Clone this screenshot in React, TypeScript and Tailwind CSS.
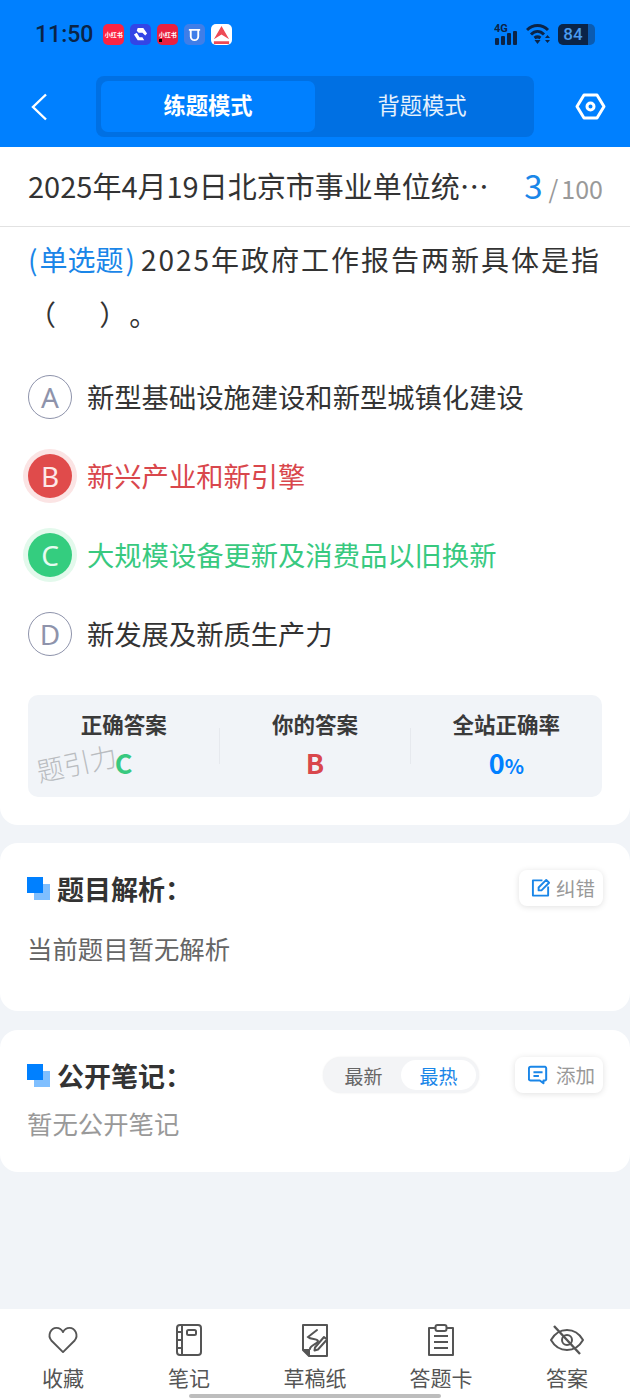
const font = '[font-family:"Noto_Sans_CJK_SC","Noto_Sans",sans-serif]';

function AppBadge({ bg, children }: { bg: string; children?: React.ReactNode }) {
  return <div className={`relative flex h-[21px] w-[21px] items-center justify-center overflow-hidden rounded-[5px] ${bg}`}>{children}</div>;
}

function StatusBar() {
  return (
    <div className="flex h-[68px] items-center pl-[35px] pr-[35px]">
      <span className="text-[23px] font-medium leading-none text-[#0b2447] [font-family:Roboto,sans-serif]">11:50</span>
      <div className="ml-[10px] flex gap-[6px]">
        <AppBadge bg="bg-[#fb2443]"><span className="text-[6px] font-bold text-white">小红书</span></AppBadge>
        <AppBadge bg="bg-[#3345e6]">
          <svg width="15" height="15" viewBox="0 0 16 16" fill="#fff"><path d="M5 1h6l4 6-2 2-3-3H6L4 4zM1 8l3-2 3 5h3l2 3H5z" /></svg>
        </AppBadge>
        <AppBadge bg="bg-[#e9203f]">
          <span className="text-[6px] font-bold text-white">小红书</span>
          <span className="absolute bottom-[3px] left-[2px] h-[3px] w-[3px] bg-black" />
        </AppBadge>
        <AppBadge bg="bg-[#3f7ee8]">
          <svg width="15" height="15" viewBox="0 0 16 16" fill="none" stroke="#fff" strokeWidth="2"><path d="M4 2v8a4 4 0 0 0 8 0V2M2 3h12" /></svg>
        </AppBadge>
        <AppBadge bg="bg-white">
          <svg width="19" height="19" viewBox="0 0 20 20"><path d="M10 1 2 15l8-5 8 5z" fill="#ee4a55" /><path d="M2 17h16v3H2z" fill="#ee4a55" /></svg>
        </AppBadge>
      </div>
      <div className="ml-auto flex items-center gap-[7px]">
        <svg width="25" height="22" viewBox="0 0 25 22" fill="#0b2447">
          <text x="0" y="9" fontSize="11" fontWeight="700" fontFamily="Roboto">4G</text>
          <rect x="1" y="15" width="4" height="7" rx="1" />
          <rect x="7" y="13" width="4" height="9" rx="1" />
          <rect x="13" y="10" width="4" height="12" rx="1" />
          <rect x="19" y="8" width="4" height="14" rx="1" />
        </svg>
        <svg width="25" height="22" viewBox="0 0 25 22" fill="none" stroke="#0b2447" strokeWidth="3">
          <path d="M1 7c6-6 15-6 21 0M5 11.500c4-4 9-4 13 0M8.500 15c2-1.500 4-1.500 6 0" />
          <path d="M8.500 17h6L11.500 21z" fill="#0b2447" stroke="none" />
          <path d="M19 15l2.500-3 2.500 3zM19 17l2.500 3 2.500-3z" fill="#0b2447" stroke="none" />
        </svg>
        <div className="flex h-[21px] w-[37px]">
          <div className="flex w-[30px] items-center justify-center rounded-l-[5px] bg-[#0b2447]">
            <span className="text-[17px] font-medium leading-none text-[#4a9bf0] [font-family:Roboto,sans-serif]">84</span>
          </div>
          <div className="w-[7px] rounded-r-[5px] bg-[#0b5bb0]" />
        </div>
      </div>
    </div>
  );
}

function NavBar() {
  return (
    <div className="flex h-[79px] items-start pt-[8px]">
      <div className="flex h-[61px] w-[96px] items-center pl-[30px]">
        <svg width="18" height="28" viewBox="0 0 18 28" fill="none" stroke="#fff" strokeWidth="2.400"><path d="M16 1.500 3 14l13 12.500" /></svg>
      </div>
      <div className="flex h-[61px] w-[438px] rounded-[8px] bg-[#0070e3] p-[5px]">
        <div className="flex w-[214px] items-center justify-center rounded-[7px] bg-[#0080ff] pb-[3px] text-[22.300px] font-bold text-white">练题模式</div>
        <div className="flex flex-1 items-center justify-center pb-[3px] text-[22.300px] text-white/90">背题模式</div>
      </div>
      <div className="flex h-[61px] flex-1 items-center justify-center pl-[17px]">
        <svg width="31" height="27" viewBox="0 0 31 27" fill="none" stroke="#fff" strokeWidth="3">
          <path d="M9 2h13l7 11.500L22 25H9L2 13.500z" strokeLinejoin="round" />
          <circle cx="15.500" cy="13.500" r="3.500" />
        </svg>
      </div>
    </div>
  );
}

function Option({ letter, text, state }: { letter: string; text: string; state?: "wrong" | "right" }) {
  const circle =
    state === "wrong"
      ? "bg-[#e04b4b] text-[#fde8e8] shadow-[0_0_0_5px_#fbe4e4]"
      : state === "right"
        ? "bg-[#34cd7f] text-[#e6fbf0] shadow-[0_0_0_5px_#e3f9ec]"
        : "border border-[#8e93ab] text-[#8e93ab]";
  const color = state === "wrong" ? "text-[#d9474c]" : state === "right" ? "text-[#38c97f]" : "text-[#333]";
  return (
    <div className="flex h-[79px] items-center">
      <div className={`flex h-[44px] w-[44px] shrink-0 items-center justify-center rounded-full text-[28px] [font-family:"Noto_Sans",sans-serif] ${circle}`}>{letter}</div>
      <span className={`ml-[15px] text-[27.300px] leading-none ${color}`}>{text}</span>
    </div>
  );
}

function Stat({ label, children }: { label: string; children: React.ReactNode }) {
  return (
    <div className="flex flex-col items-center">
      <span className="text-[21.500px] font-bold leading-[30px] text-[#3a3a3a]">{label}</span>
      <div className="mt-[7px] h-[34px] leading-[34px]">{children}</div>
    </div>
  );
}

function SectionIcon() {
  return (
    <div className="relative h-[23px] w-[23px] shrink-0">
      <div className="absolute bottom-0 right-0 h-[16px] w-[16px] bg-[#7fbfff]" />
      <div className="absolute left-0 top-0 h-[16px] w-[16px] bg-[#0080ff]" />
    </div>
  );
}

function SmallButton({ icon, label, wide }: { icon: React.ReactNode; label: string; wide?: boolean }) {
  return (
    <div className={`flex h-[36px] items-center rounded-[8px] bg-white pr-[8px] shadow-[0_1px_6px_rgba(0,0,0,0.12)] ${wide ? "gap-[8px] pl-[13px]" : "gap-[5px] pl-[12px]"}`}>
      {icon}
      <span className="text-[19.500px] leading-none text-[#999]">{label}</span>
    </div>
  );
}

function TabItem({ icon, label }: { icon: React.ReactNode; label: string }) {
  return (
    <div className="flex flex-col items-center">
      <div className="flex h-[38px] items-center">{icon}</div>
      <span className="mt-[3px] text-[21px] leading-[30px] text-[#555]">{label}</span>
    </div>
  );
}

export default function App() {
  return (
    <div className={`relative flex h-[1400px] w-[630px] flex-col overflow-hidden bg-[#f1f4f8] ${font}`}>
      <div className="bg-[#0080ff]">
        <StatusBar />
        <NavBar />
      </div>

      <div className="rounded-b-[18px] bg-white">
        <div className="flex h-[80px] items-center border-b border-[#e2e2e2] pb-[2px] pl-[28px] pr-[27px]">
          <span className="text-[29px] leading-none text-[#333]">2025年4月19日北京市事业单位统⋯</span>
          <div className="ml-auto flex items-baseline">
            <span className="text-[33px] leading-none text-[#1a86e8]">3</span>
            <span className="ml-[6px] text-[25px] leading-none text-[#999]">/</span>
            <span className="ml-[3px] text-[25px] leading-none text-[#999]">100</span>
          </div>
        </div>

        <div className="px-[28px] pt-[5px]">
          <p className="text-[28px] leading-[55px] tracking-[2px] text-[#333] [text-spacing-trim:space-all]">
            <span className="mr-[6px] tracking-normal text-[#1a86e8]">(<span className="mx-[2px]">单选题</span>)</span>2025年政府工作报告两新具体是指（&nbsp;&nbsp;&nbsp;&nbsp;&nbsp;）。
          </p>
          <div className="mt-[15px]">
            <Option letter="A" text="新型基础设施建设和新型城镇化建设" />
            <Option letter="B" text="新兴产业和新引擎" state="wrong" />
            <Option letter="C" text="大规模设备更新及消费品以旧换新" state="right" />
            <Option letter="D" text="新发展及新质生产力" />
          </div>

          <div className="relative mt-[22px] grid h-[102px] grid-cols-3 items-center rounded-[10px] bg-[#f1f4f8] pb-[4px]">
            <Stat label="正确答案"><span className="text-[27px] font-bold text-[#38c97f]">C</span></Stat>
            <Stat label="你的答案"><span className="text-[27px] font-bold text-[#d9474c]">B</span></Stat>
            <Stat label="全站正确率">
              <span className="text-[27px] font-bold text-[#0080ff]">0</span>
              <span className="text-[20px] font-bold text-[#0080ff]">%</span>
            </Stat>
            <div className="absolute left-[191px] top-[33px] h-[36px] w-px bg-[#e6e9ee]" />
            <div className="absolute left-[382px] top-[33px] h-[36px] w-px bg-[#e6e9ee]" />
            <span className="absolute left-[8px] top-[54px] -rotate-[12deg] text-[27px] font-light leading-none text-[#b9bcc0]">题引力</span>
          </div>
        </div>
        <div className="h-[28px]" />
      </div>

      <div className="mt-[18px] h-[168px] rounded-[18px] bg-white px-[27px] pt-[27px]">
        <div className="flex h-[36px] items-center">
          <SectionIcon />
          <span className="ml-[7px] text-[27px] font-bold leading-none text-[#333]">题目解析：</span>
          <div className="ml-auto">
            <SmallButton
              label="纠错"
              icon={
                <svg width="20" height="20" viewBox="0 0 21 21" fill="none" stroke="#1a86e8" strokeWidth="2">
                  <path d="M12 2.500H2v16h16V9" strokeLinejoin="round" />
                  <path d="M8 13v-3l8-8 3 3-8 8z" strokeLinejoin="round" />
                </svg>
              }
            />
          </div>
        </div>
        <p className="mt-[24px] text-[25.400px] leading-[36px] text-[#666]">当前题目暂无解析</p>
      </div>

      <div className="mt-[19px] h-[142px] rounded-[18px] bg-white px-[27px] pt-[27px]">
        <div className="flex h-[36px] items-center">
          <SectionIcon />
          <span className="ml-[7px] text-[27px] font-bold leading-none text-[#333]">公开笔记：</span>
          <div className="ml-auto flex h-[36px] w-[156px] items-center rounded-full bg-[#f3f4f6] p-[3px] text-[19px] shadow-[0_0_2px_rgba(0,0,0,0.08)]">
            <span className="flex-1 text-center leading-none text-[#666]">最新</span>
            <span className="flex h-[30px] w-[75px] items-center justify-center rounded-full bg-white leading-none text-[#1a86e8]">最热</span>
          </div>
          <div className="ml-[36px]">
            <SmallButton
              wide
              label="添加"
              icon={
                <svg width="20" height="20" viewBox="0 0 22 22" fill="none" stroke="#1a86e8" strokeWidth="2.200">
                  <path d="M3 2h16a2 2 0 0 1 1 2v12a2 2 0 0 1-1 1h-2v3l-4-3H3a2 2 0 0 1-2-1V4a2 2 0 0 1 2-2z" strokeLinejoin="round" />
                  <path d="M6 8h10M6 12h6" />
                </svg>
              }
            />
          </div>
        </div>
        <p className="mt-[12px] text-[25.400px] leading-[36px] text-[#999]">暂无公开笔记</p>
      </div>

      <div className="mt-auto grid h-[91px] grid-cols-5 items-start bg-white pt-[12px]">
        <TabItem
          label="收藏"
          icon={
            <svg width="32" height="28" viewBox="0 0 32 30" fill="none" stroke="#555" strokeWidth="2">
              <path d="M16 28 3.500 15.500C-1 10 3 2 9 2c3 0 5.500 1.500 7 4.500C17.500 3.500 20 2 23 2c6 0 10 8 5.500 13.500z" strokeLinejoin="round" />
            </svg>
          }
        />
        <TabItem
          label="笔记"
          icon={
            <svg width="26" height="32" viewBox="0 0 26 32" fill="none" stroke="#555" strokeWidth="2">
              <rect x="1" y="1" width="24" height="30" rx="3" />
              <path d="M6 1v30M1 8h5M1 16h5M1 24h5" />
              <rect x="11" y="6" width="9" height="5" rx="1.500" />
            </svg>
          }
        />
        <TabItem
          label="草稿纸"
          icon={
            <svg width="28" height="33" viewBox="0 0 28 33" fill="none" stroke="#555" strokeWidth="2">
              <path d="M2 1h24v31H8l-6-6z" strokeLinejoin="round" />
              <path d="M2 26h6v6" fill="#555" strokeLinejoin="round" />
              <path d="M16 6 7 13c3 3 9 1 10 4 0 3-8 4-8 8" strokeLinecap="round" />
              <path d="M14 23.500 23 13l3 2.500-9 10-3.500 1z" fill="#fff" strokeLinejoin="round" />
            </svg>
          }
        />
        <TabItem
          label="答题卡"
          icon={
            <svg width="28" height="32" viewBox="0 0 28 32" fill="none" stroke="#555" strokeWidth="2">
              <path d="M8 4H2v27h24V4h-6" strokeLinejoin="round" />
              <rect x="8.500" y="1" width="11" height="6" rx="2" />
              <path d="M7 12h14M7 18h14M7 24h14" />
            </svg>
          }
        />
        <TabItem
          label="答案"
          icon={
            <svg width="36" height="30" viewBox="0 0 36 30" fill="none" stroke="#555" strokeWidth="2">
              <path d="M2 15C6 8 12 5 18 5s12 3 16 10c-4 7-10 10-16 10S6 22 2 15z" strokeLinejoin="round" />
              <circle cx="18" cy="15" r="5" />
              <path d="M5 1l26 28" strokeWidth="2.400" />
            </svg>
          }
        />
      </div>

      <div className="absolute bottom-[2px] left-[189px] h-[4px] w-[252px] rounded-full bg-[#bdbdbd]" />
    </div>
  );
}
